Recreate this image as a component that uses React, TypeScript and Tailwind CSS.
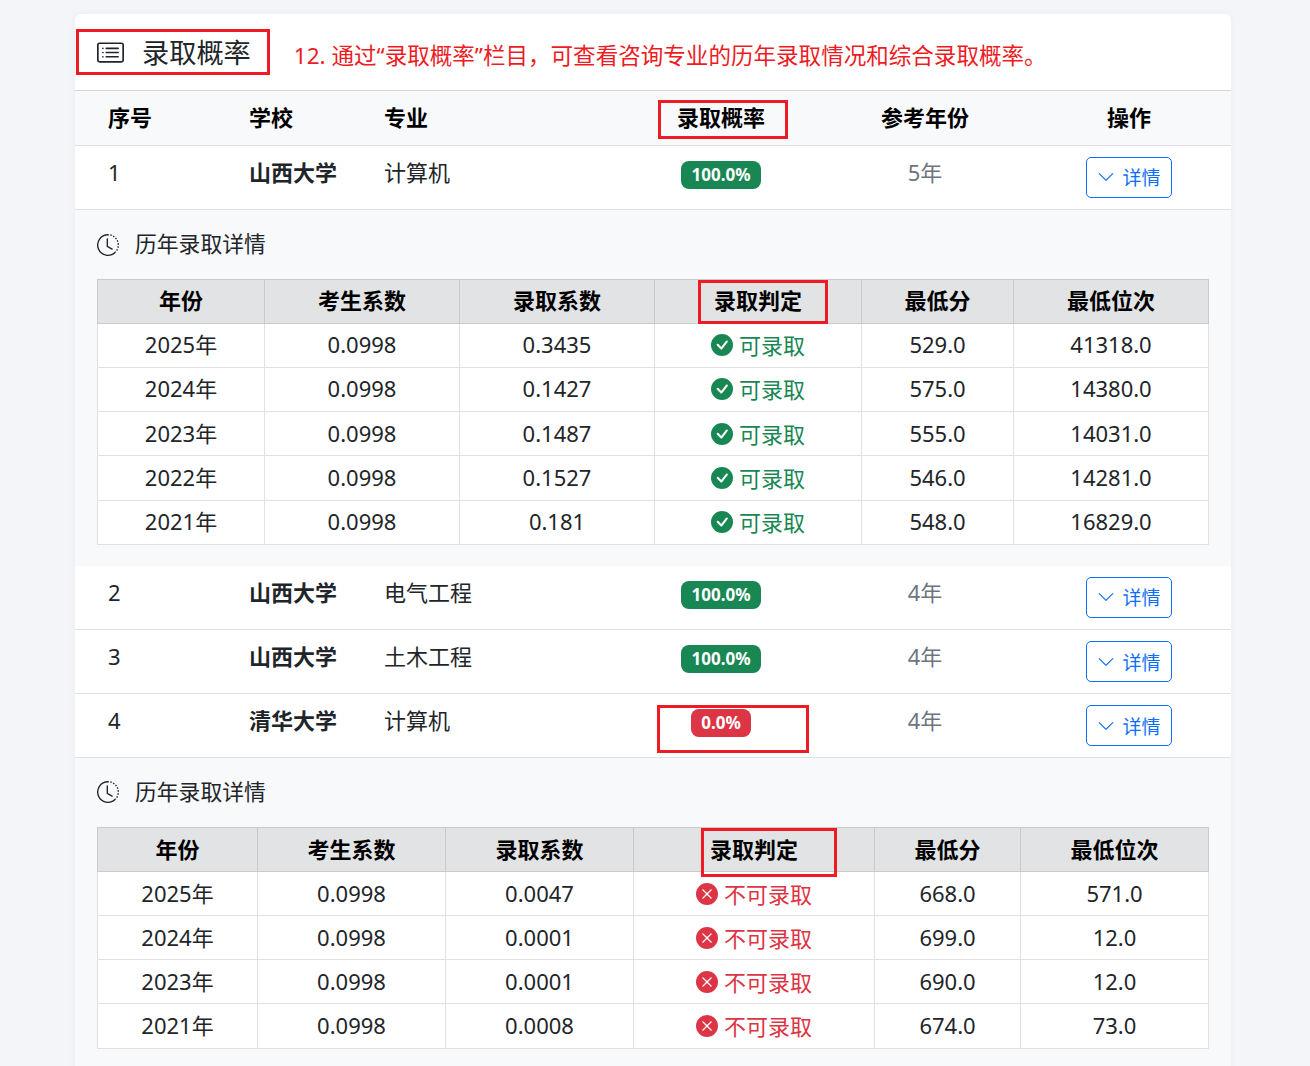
import React from 'react';

const font = { fontFamily: '"Noto Sans", "Noto Sans CJK SC", sans-serif' };

type Detail = { year: string; exam: string; admit: string; low: string; rank: string };

const shanxiDetails: Detail[] = [
  { year: '2025年', exam: '0.0998', admit: '0.3435', low: '529.0', rank: '41318.0' },
  { year: '2024年', exam: '0.0998', admit: '0.1427', low: '575.0', rank: '14380.0' },
  { year: '2023年', exam: '0.0998', admit: '0.1487', low: '555.0', rank: '14031.0' },
  { year: '2022年', exam: '0.0998', admit: '0.1527', low: '546.0', rank: '14281.0' },
  { year: '2021年', exam: '0.0998', admit: '0.181', low: '548.0', rank: '16829.0' },
];

const tsinghuaDetails: Detail[] = [
  { year: '2025年', exam: '0.0998', admit: '0.0047', low: '668.0', rank: '571.0' },
  { year: '2024年', exam: '0.0998', admit: '0.0001', low: '699.0', rank: '12.0' },
  { year: '2023年', exam: '0.0998', admit: '0.0001', low: '690.0', rank: '12.0' },
  { year: '2021年', exam: '0.0998', admit: '0.0008', low: '674.0', rank: '73.0' },
];

const ListIcon = () => (
  <svg width="27" height="27" viewBox="0 0 16 16" fill="#212529">
    <path d="M14.5 3a.5.5 0 0 1 .5.5v9a.5.5 0 0 1-.5.5h-13a.5.5 0 0 1-.5-.5v-9a.5.5 0 0 1 .5-.5h13zm-13-1A1.5 1.5 0 0 0 0 3.5v9A1.5 1.5 0 0 0 1.5 14h13a1.5 1.5 0 0 0 1.5-1.5v-9A1.5 1.5 0 0 0 14.5 2h-13z" />
    <path d="M5 8a.5.5 0 0 1 .5-.5h7a.5.5 0 0 1 0 1h-7A.5.5 0 0 1 5 8zm0-2.5a.5.5 0 0 1 .5-.5h7a.5.5 0 0 1 0 1h-7a.5.5 0 0 1-.5-.5zm0 5a.5.5 0 0 1 .5-.5h7a.5.5 0 0 1 0 1h-7a.5.5 0 0 1-.5-.5zm-1-5a.5.5 0 1 1-1 0 .5.5 0 0 1 1 0zM4 8a.5.5 0 1 1-1 0 .5.5 0 0 1 1 0zm0 2.5a.5.5 0 1 1-1 0 .5.5 0 0 1 1 0z" />
  </svg>
);

const ClockIcon = () => (
  <svg width="22" height="22" viewBox="0 0 16 16" fill="#212529">
    <path d="M8.515 1.019A7 7 0 0 0 8 1V0a8 8 0 0 1 .589.022l-.074.997zm2.004.45a7.003 7.003 0 0 0-.985-.299l.219-.976c.383.086.76.2 1.126.342l-.36.933zm1.37.71a7.01 7.01 0 0 0-.439-.27l.493-.87a8.025 8.025 0 0 1 .979.654l-.615.789a6.996 6.996 0 0 0-.418-.302zm1.834 1.79a6.99 6.99 0 0 0-.653-.796l.724-.69c.27.285.52.59.747.91l-.818.576zm.744 1.352a7.08 7.08 0 0 0-.214-.468l.893-.45a7.976 7.976 0 0 1 .45 1.088l-.95.313a7.023 7.023 0 0 0-.179-.483zm.53 2.507a6.991 6.991 0 0 0-.1-1.025l.985-.17c.067.386.106.778.116 1.17l-1 .025zm-.131 1.538c.033-.17.06-.339.081-.51l.993.123a7.957 7.957 0 0 1-.23 1.155l-.964-.267c.046-.165.086-.332.12-.501zm-.952 2.379c.184-.29.346-.594.486-.908l.914.405c-.16.36-.345.706-.555 1.038l-.845-.535zm-.964 1.205c.122-.122.239-.248.35-.378l.758.653a8.073 8.073 0 0 1-.401.432l-.707-.707z" />
    <path d="M8 1a7 7 0 1 0 4.95 11.95l.707.707A8.001 8.001 0 1 1 8 0v1z" />
    <path d="M7.5 3a.5.5 0 0 1 .5.5v5.21l3.248 1.856a.5.5 0 0 1-.496.868l-3.5-2A.5.5 0 0 1 7 9V3.5a.5.5 0 0 1 .5-.5z" />
  </svg>
);

const CheckIcon = () => (
  <svg width="22" height="22" viewBox="0 0 16 16" fill="#198754">
    <path d="M16 8A8 8 0 1 1 0 8a8 8 0 0 1 16 0zm-3.97-3.03a.75.75 0 0 0-1.08.022L7.477 9.417 5.384 7.323a.75.75 0 0 0-1.06 1.06L6.97 11.03a.75.75 0 0 0 1.079-.02l3.992-4.99a.75.75 0 0 0-.01-1.05z" />
  </svg>
);

const CrossIcon = () => (
  <svg width="22" height="22" viewBox="0 0 16 16" fill="#dc3545">
    <path d="M16 8A8 8 0 1 1 0 8a8 8 0 0 1 16 0zM5.354 4.646a.5.5 0 1 0-.708.708L7.293 8l-2.647 2.646a.5.5 0 0 0 .708.708L8 8.707l2.646 2.647a.5.5 0 0 0 .708-.708L8.707 8l2.647-2.646a.5.5 0 0 0-.708-.708L8 7.293 5.354 4.646z" />
  </svg>
);

const DetailButton = () => (
  <button className="inline-flex items-center justify-center gap-[7px] w-[86px] h-[41px] border border-[#0d6efd] rounded-[5px] bg-white text-[#0d6efd] text-[19px]">
    <svg width="18" height="18" viewBox="0 0 16 16" fill="#0d6efd">
      <path d="M1.646 4.646a.5.5 0 0 1 .708 0L8 10.293l5.646-5.647a.5.5 0 0 1 .708.708l-6 6a.5.5 0 0 1-.708 0l-6-6a.5.5 0 0 1 0-.708z" />
    </svg>
    <span className="pt-[2px]">详情</span>
  </button>
);

const SchoolRow = ({ no, school, major, rate, years, ok }: { no: string; school: string; major: string; rate: string; years: string; ok: boolean }) => (
  <tr className="h-[64px] border-b border-[#dee2e6] bg-white align-top">
    <td className="pl-[33px] pt-[10px] leading-[32px] text-[#212529]">{no}</td>
    <td className="pl-[31px] pt-[10px] leading-[32px] font-bold text-[#212529]">{school}</td>
    <td className="pl-[31px] pt-[10px] leading-[32px] text-[#212529]">{major}</td>
    <td className="pt-[15px] text-center leading-[0]">
      <span className={`inline-flex items-center justify-center h-[28px] rounded-[8px] text-white text-[17px] leading-[28px] font-bold ${ok ? 'w-[80px] bg-[#198754]' : 'w-[60px] bg-[#dc3545]'}`}>
        {rate}
      </span>
    </td>
    <td className="pt-[10px] leading-[32px] text-center text-[#6c757d]">{years}</td>
    <td className="pt-[11px] text-center"><DetailButton /></td>
  </tr>
);

const DetailTable = ({ rows, ok, widths, rowClass }: { rows: Detail[]; ok: boolean; widths: number[]; rowClass: string }) => (
  <table className="w-[1111px] table-fixed border-collapse text-center text-[#212529]">
    <colgroup>
      {widths.map((w, i) => <col key={i} style={{ width: w }} />)}
    </colgroup>
    <thead>
      <tr className="h-[44px] bg-[#e2e3e5] font-bold text-black">
        {['年份', '考生系数', '录取系数', '录取判定', '最低分', '最低位次'].map((h) => (
          <th key={h} className="border border-[#c9cacc] pb-[2px] font-bold leading-[30px]">{h}</th>
        ))}
      </tr>
    </thead>
    <tbody className="bg-white">
      {rows.map((r) => (
        <tr key={r.year} className={rowClass}>
          <td className="border border-[#dee2e6] pb-[2px] leading-[30px]">{r.year}</td>
          <td className="border border-[#dee2e6] pb-[2px] leading-[30px]">{r.exam}</td>
          <td className="border border-[#dee2e6] pb-[2px] leading-[30px]">{r.admit}</td>
          <td className="border border-[#dee2e6] leading-[30px]">
            <span className={`inline-flex items-center justify-center gap-[6px] translate-y-[1px] ${ok ? 'text-[#198754]' : 'text-[#dc3545]'}`}>
              {ok ? <CheckIcon /> : <CrossIcon />}
              <span>{ok ? '可录取' : '不可录取'}</span>
            </span>
          </td>
          <td className="border border-[#dee2e6] pb-[2px] leading-[30px]">{r.low}</td>
          <td className="border border-[#dee2e6] pb-[2px] leading-[30px]">{r.rank}</td>
        </tr>
      ))}
    </tbody>
  </table>
);

const DetailPanel = ({ rows, ok, widths, panelClass, rowClass }: { rows: Detail[]; ok: boolean; widths: number[]; panelClass: string; rowClass: string }) => (
  <tr>
    <td colSpan={6} className="p-0">
      <div className={`bg-[#f8f9fa] px-[22px] ${panelClass}`}>
        <div className="flex items-center gap-[16px] h-[36px] text-[21.8px] text-[#212529]">
          <ClockIcon />
          <span>历年录取详情</span>
        </div>
        <DetailTable rows={rows} ok={ok} widths={widths} rowClass={rowClass} />
      </div>
    </td>
  </tr>
);

const RedBox = ({ className }: { className: string }) => (
  <div className={`absolute border-[3px] border-[#ed1c24] pointer-events-none ${className}`} />
);

export default function App() {
  return (
    <div className="relative h-[1066px] overflow-hidden bg-[#f4f5f9] pt-[14px] text-[22px]" style={font}>
      <div className="ml-[75px] w-[1156px] rounded-t-[6px] bg-white shadow-[0_0_6px_rgba(60,70,110,0.05)]">
        <div className="flex items-center h-[77px] border-b border-[#d3d5d8] pl-[22px]">
          <ListIcon />
          <span className="ml-[18px] text-[27.2px] text-[#212529] translate-y-[1px]">录取概率</span>
          <span className="ml-[43px] text-[22.56px] text-[#ed1c24] translate-y-[4px]">12. 通过“录取概率”栏目，可查看咨询专业的历年录取情况和综合录取概率。</span>
        </div>
        <table className="w-full table-fixed border-collapse">
          <colgroup>
            <col className="w-[143px]" />
            <col className="w-[135px]" />
            <col className="w-[266px]" />
            <col className="w-[204px]" />
            <col className="w-[204px]" />
            <col className="w-[204px]" />
          </colgroup>
          <thead>
            <tr className="h-[54px] bg-[#f8f9fa] border-b border-[#dee2e6] text-black">
              <th className="pl-[33px] text-left font-bold">序号</th>
              <th className="pl-[31px] text-left font-bold">学校</th>
              <th className="pl-[31px] text-left font-bold">专业</th>
              <th className="text-center font-bold">录取概率</th>
              <th className="text-center font-bold">参考年份</th>
              <th className="text-center font-bold">操作</th>
            </tr>
          </thead>
          <tbody>
            <SchoolRow no="1" school="山西大学" major="计算机" rate="100.0%" years="5年" ok />
            <DetailPanel rows={shanxiDetails} ok widths={[167, 195, 195, 207, 152, 195]} panelClass="pt-[17px] pb-[21px] [&>div]:mb-[16px]" rowClass="h-[44.25px]" />
            <SchoolRow no="2" school="山西大学" major="电气工程" rate="100.0%" years="4年" ok />
            <SchoolRow no="3" school="山西大学" major="土木工程" rate="100.0%" years="4年" ok />
            <SchoolRow no="4" school="清华大学" major="计算机" rate="0.0%" years="4年" ok={false} />
            <DetailPanel rows={tsinghuaDetails} ok={false} widths={[160, 188, 188, 241, 146, 188]} panelClass="pt-[16px] pb-[40px] [&>div]:mb-[17px]" rowClass="h-[44px] last:h-[45px]" />
          </tbody>
        </table>
      </div>
      <RedBox className="left-[76px] top-[29px] w-[194px] h-[46px]" />
      <RedBox className="left-[658px] top-[100px] w-[130px] h-[39px]" />
      <RedBox className="left-[698px] top-[280px] w-[130px] h-[44px]" />
      <RedBox className="left-[657px] top-[705px] w-[152px] h-[48px]" />
      <RedBox className="left-[701px] top-[828px] w-[136px] h-[49px]" />
    </div>
  );
}
